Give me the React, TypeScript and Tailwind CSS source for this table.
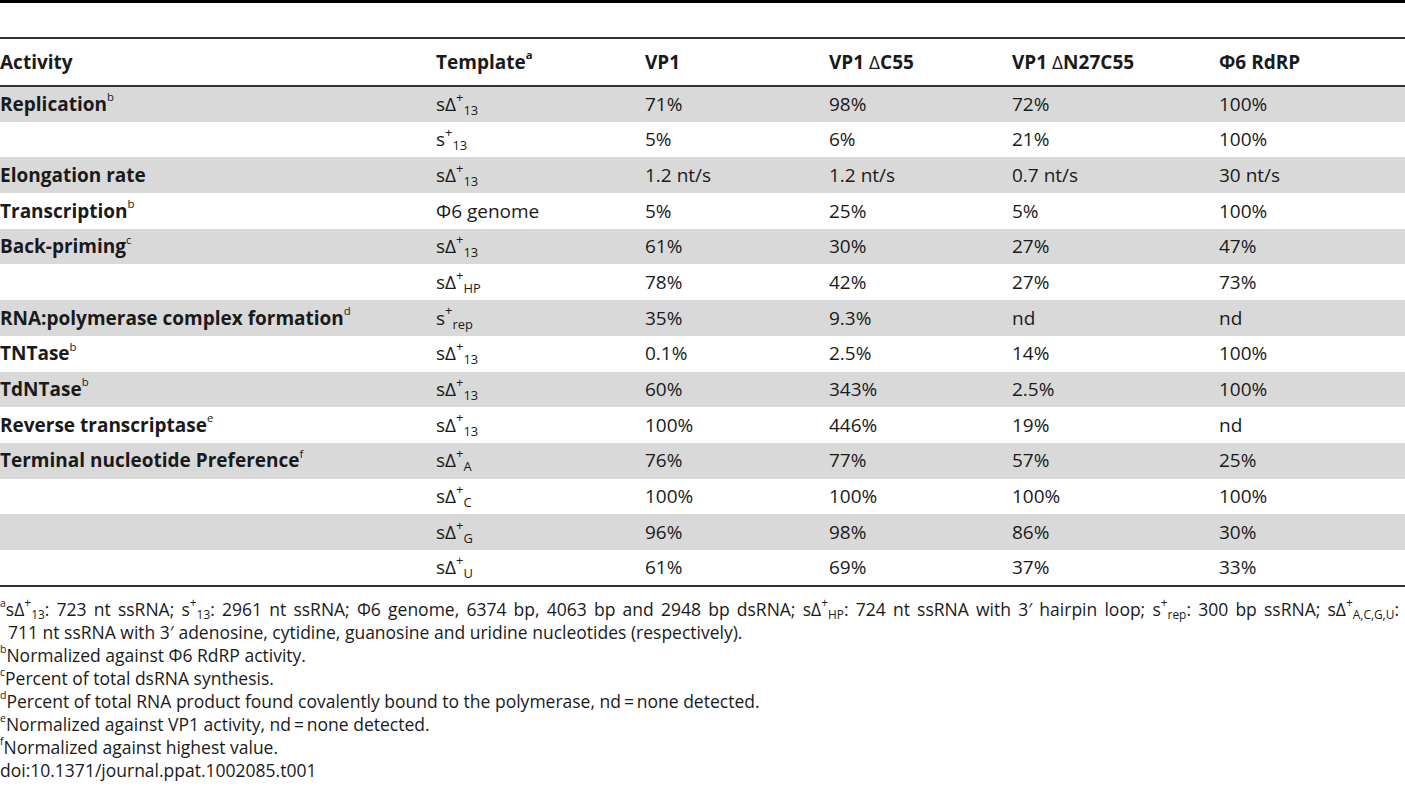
import React from 'react';

type Row = {
  activity?: string;
  mark?: string;
  template: React.ReactNode;
  values: string[];
};

// template label: base, then a raised "+" and a lowered index written after it
const T = ({ base, sup, sub }: { base: string; sup: string; sub: string }) => (
  <span>
    {base}
    <span className="text-[0.68em] leading-none relative -top-[0.72em]">{sup}</span>
    <span className="text-[0.68em] leading-none relative top-[0.3em]">{sub}</span>
  </span>
);

const Sup = ({ children }: { children: React.ReactNode }) => (
  <span className="text-[0.6em] leading-none relative -top-[0.85em] font-normal">{children}</span>
);

const rows: Row[] = [
  { activity: 'Replication', mark: 'b', template: <T base="sΔ" sup="+" sub="13" />, values: ['71%', '98%', '72%', '100%'] },
  { template: <T base="s" sup="+" sub="13" />, values: ['5%', '6%', '21%', '100%'] },
  { activity: 'Elongation rate', template: <T base="sΔ" sup="+" sub="13" />, values: ['1.2 nt/s', '1.2 nt/s', '0.7 nt/s', '30 nt/s'] },
  { activity: 'Transcription', mark: 'b', template: 'Φ6 genome', values: ['5%', '25%', '5%', '100%'] },
  { activity: 'Back-priming', mark: 'c', template: <T base="sΔ" sup="+" sub="13" />, values: ['61%', '30%', '27%', '47%'] },
  { template: <T base="sΔ" sup="+" sub="HP" />, values: ['78%', '42%', '27%', '73%'] },
  { activity: 'RNA:polymerase complex formation', mark: 'd', template: <T base="s" sup="+" sub="rep" />, values: ['35%', '9.3%', 'nd', 'nd'] },
  { activity: 'TNTase', mark: 'b', template: <T base="sΔ" sup="+" sub="13" />, values: ['0.1%', '2.5%', '14%', '100%'] },
  { activity: 'TdNTase', mark: 'b', template: <T base="sΔ" sup="+" sub="13" />, values: ['60%', '343%', '2.5%', '100%'] },
  { activity: 'Reverse transcriptase', mark: 'e', template: <T base="sΔ" sup="+" sub="13" />, values: ['100%', '446%', '19%', 'nd'] },
  { activity: 'Terminal nucleotide Preference', mark: 'f', template: <T base="sΔ" sup="+" sub="A" />, values: ['76%', '77%', '57%', '25%'] },
  { template: <T base="sΔ" sup="+" sub="C" />, values: ['100%', '100%', '100%', '100%'] },
  { template: <T base="sΔ" sup="+" sub="G" />, values: ['96%', '98%', '86%', '30%'] },
  { template: <T base="sΔ" sup="+" sub="U" />, values: ['61%', '69%', '37%', '33%'] },
];

const App: React.FC = () => {
  return (
    <div className="w-[1405px] h-[800px] bg-white text-[#1a1a1a] overflow-hidden" style={{ fontFamily: '"Open Sans", "Liberation Sans", sans-serif' }}>
      <div className="h-[3px] bg-black" />
      <div className="h-[34px]" />
      <table className="w-full table-fixed border-collapse text-[19px]">
        <colgroup>
          <col className="w-[436px]" />
          <col className="w-[209px]" />
          <col className="w-[184px]" />
          <col className="w-[183px]" />
          <col className="w-[207px]" />
          <col />
        </colgroup>
        <thead>
          <tr className="h-[48px] border-t-2 border-b-2 border-[#333]">
            <th className="text-left font-bold p-0">Activity</th>
            <th className="text-left font-bold p-0">
              Template<span className="text-[0.6em] leading-none relative -top-[0.85em]">a</span>
            </th>
            <th className="text-left font-bold p-0">VP1</th>
            <th className="text-left font-bold p-0">VP1 <span className="font-normal">Δ</span>C55</th>
            <th className="text-left font-bold p-0">VP1 <span className="font-normal">Δ</span>N27C55</th>
            <th className="text-left font-bold p-0">Φ6 RdRP</th>
          </tr>
        </thead>
        <tbody className="border-b-2 border-[#333]">
          {rows.map((r, i) => (
            <tr key={i} className={i % 2 === 0 ? 'h-[35.7px] bg-[#d9d9d9]' : 'h-[35.7px] bg-white'}>
              <td className="p-0 font-bold whitespace-nowrap">
                {r.activity}
                {r.mark && <Sup>{r.mark}</Sup>}
              </td>
              <td className="p-0 whitespace-nowrap">{r.template}</td>
              {r.values.map((v, j) => (
                <td key={j} className="p-0 whitespace-nowrap">{v}</td>
              ))}
              <td className="p-0" />
            </tr>
          ))}
        </tbody>
      </table>
      <div className="pt-[11px] text-[17.5px] leading-[23px]">
        <div className="w-[1399px] text-justify [text-align-last:justify]">
          <Sup>a</Sup>
          <T base="sΔ" sup="+" sub="13" />: 723 nt ssRNA; <T base="s" sup="+" sub="13" />: 2961 nt ssRNA; Φ6 genome, 6374 bp, 4063 bp and 2948 bp dsRNA;{' '}
          <T base="sΔ" sup="+" sub="HP" />: 724 nt ssRNA with 3′ hairpin loop; <T base="s" sup="+" sub="rep" />: 300 bp ssRNA;{' '}
          <T base="sΔ" sup="+" sub="A,C,G,U" />:
        </div>
        <div className="pl-[8px] whitespace-nowrap">711 nt ssRNA with 3′ adenosine, cytidine, guanosine and uridine nucleotides (respectively).</div>
        <div className="whitespace-nowrap"><Sup>b</Sup>Normalized against Φ6 RdRP activity.</div>
        <div className="whitespace-nowrap"><Sup>c</Sup>Percent of total dsRNA synthesis.</div>
        <div className="whitespace-nowrap"><Sup>d</Sup>Percent of total RNA product found covalently bound to the polymerase, nd{'\u2009'}={'\u2009'}none detected.</div>
        <div className="whitespace-nowrap"><Sup>e</Sup>Normalized against VP1 activity, nd{'\u2009'}={'\u2009'}none detected.</div>
        <div className="whitespace-nowrap"><Sup>f</Sup>Normalized against highest value.</div>
        <div className="whitespace-nowrap">doi:10.1371/journal.ppat.1002085.t001</div>
      </div>
    </div>
  );
};

export default App;
